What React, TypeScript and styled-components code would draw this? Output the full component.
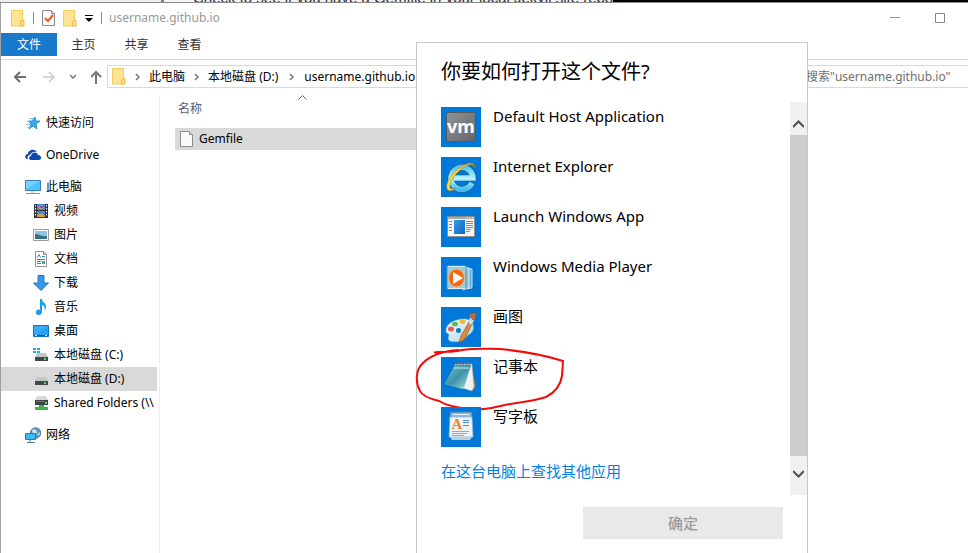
import React from "react";
import styled, { createGlobalStyle } from "styled-components";

const GlobalStyle = createGlobalStyle`
  * { box-sizing: border-box; }
  html, body, #root { height: 100%; }
  body {
    margin: 0;
    overflow: hidden;
    background: #fff;
    color: #000;
    font: 12px/24px "Noto Sans", "Noto Sans CJK SC", sans-serif;
  }
  button, input { font: inherit; color: inherit; }
  button { border: 0; padding: 0; background: none; }
  svg { display: block; flex: none; }
`;

const Desktop = styled.div`
  display: flex;
  flex-direction: column;
  height: 100%;
`;

const PageBehind = styled.div`
  display: flex;
  height: 3px;
  flex: none;
  overflow: hidden;
  background: #000;
  border-bottom: 1px solid #8c8c8c;
`;

const PageText = styled.div`
  display: flex;
  align-items: flex-end;
  height: 2px;
  width: 613px;
  padding-left: 193px;
  background: linear-gradient(90deg, #ededed 161px, #7b7f88 161px, #7b7f88 164px, #f4f4f4 164px);
  color: #333;
  font: 15px/9px "Liberation Sans", sans-serif;
  white-space: nowrap;
`;

const Explorer = styled.main`
  position: relative;
  display: flex;
  flex-direction: column;
  flex: 1;
  min-height: 0;
  border-left: 1px solid #a0a0a0;
`;

const TitleBar = styled.header`
  display: flex;
  align-items: center;
  height: 30px;
  padding: 0 6px 0 10px;
`;

const QuickTools = styled.div`
  display: flex;
  align-items: center;
  gap: 8px;
`;

const Rule = styled.span`
  width: 1px;
  height: 12px;
  background: #8a8a8a;
`;

const WindowTitle = styled.h1`
  flex: 1;
  margin: 0 0 0 7px;
  color: #999;
  font-size: 12px;
  font-weight: 400;
`;

const WindowButton = styled.button`
  display: grid;
  place-items: center;
  width: 45px;
  height: 28px;
`;

const Tabs = styled.nav`
  display: flex;
  height: 27px;
  border-bottom: 1px solid #dadada;
`;

const Tab = styled.button<{ $active?: boolean }>`
  width: ${(p) => (p.$active ? 56 : 53)}px;
  height: 23px;
  line-height: 24px;
  background: ${(p) => (p.$active ? "#1979ca" : "transparent")};
  color: ${(p) => (p.$active ? "#fff" : "#333")};
`;

const AddressRow = styled.div`
  display: flex;
  align-items: center;
  height: 33px;
`;

const NavButtons = styled.div`
  display: flex;
  align-items: center;
  width: 106px;
  padding-left: 13px;
  gap: 15px;
`;

const IconButton = styled.button`
  display: block;
`;

const AddressBar = styled.div`
  display: flex;
  flex: 1;
  align-items: center;
  height: 23px;
  padding-left: 4px;
  border: 1px solid #d9d9d9;
`;

const Crumb = styled.a`
  color: #000;
  text-decoration: none;
  white-space: nowrap;
`;

const CrumbArrow = styled.span<{ $wide?: boolean }>`
  display: grid;
  place-items: center;
  width: ${(p) => (p.$wide ? 26 : 23)}px;
`;

const SearchBox = styled.input`
  width: 188px;
  height: 23px;
  margin-left: 12px;
  padding: 0 0 0 25px;
  border: 1px solid #d9d9d9;
  border-right: 0;
  outline: 0;
  background: #fff;
  &::placeholder { color: #707070; opacity: 1; }
`;

const Body = styled.div`
  display: flex;
  flex: 1;
  min-height: 0;
`;

const Sidebar = styled.ul`
  width: 159px;
  margin: 2px 0 0;
  padding: 16px 2px 0 0;
  border-right: 1px solid #f0f0f0;
  list-style: none;
`;

const SideItem = styled.li<{ $child?: boolean; $selected?: boolean; $gap?: boolean }>`
  margin-top: ${(p) => (p.$gap ? 8 : 0)}px;
  padding-left: ${(p) => (p.$child ? 32 : 24)}px;
  overflow: hidden;
  background: ${(p) => (p.$selected ? "#d9d9d9" : "transparent")};
`;

const SideLink = styled.a`
  display: flex;
  align-items: center;
  gap: 5px;
  height: 24px;
  color: #000;
  text-decoration: none;
  white-space: nowrap;
`;

const Files = styled.section`
  flex: 1;
  padding: 0 200px 0 15px;
`;

const FileTable = styled.table`
  width: 100%;
  border-collapse: collapse;
`;

const NameHeader = styled.th`
  position: relative;
  height: 35px;
  padding: 4px 0 7px 3px;
  color: #4c607a;
  font-weight: 400;
  text-align: left;
`;

const SortMark = styled.svg`
  position: absolute;
  left: 123px;
  top: 2px;
`;

const FileCell = styled.td`
  padding: 0;
`;

const FileRow = styled.div`
  display: flex;
  align-items: center;
  gap: 6px;
  height: 22px;
  padding-left: 5px;
  background: #d9d9d9;
`;

const Dialog = styled.section`
  position: absolute;
  left: 415px;
  top: 39px;
  bottom: 0;
  display: flex;
  flex-direction: column;
  width: 392px;
  border: 1px solid #c8c8c8;
  border-bottom: 0;
  background: #fff;
  font-size: 15px;
`;

const DialogTitle = styled.h2`
  margin: 0;
  padding: 15px 24px 16px;
  font-size: 20px;
  font-weight: 400;
  line-height: 28px;
`;

const DialogBody = styled.div`
  display: flex;
  height: 393px;
`;

const Choices = styled.div`
  flex: 1;
  padding: 5px 0 0 24px;
`;

const AppList = styled.ul`
  display: flex;
  flex-direction: column;
  gap: 10px;
  margin: 0;
  padding: 0;
  list-style: none;
`;

const AppItem = styled.li`
  position: relative;
`;

const AppButton = styled.button`
  display: flex;
  align-items: flex-start;
  gap: 12px;
  width: 100%;
  line-height: 18px;
  text-align: left;
`;

const AppIcon = styled.svg`
  background: #0078d7;
`;

const MoreLink = styled.a`
  display: inline-block;
  margin-top: 12px;
  color: #0080e8;
  text-decoration: none;
`;

const ScrollBar = styled.div`
  display: flex;
  flex-direction: column;
  width: 17px;
  background: #cdcdcd;
`;

const ScrollArrow = styled.button<{ $end?: boolean }>`
  display: grid;
  justify-items: center;
  align-content: ${(p) => (p.$end ? "start" : "end")};
  height: ${(p) => (p.$end ? 39 : 33)}px;
  margin-top: ${(p) => (p.$end ? "auto" : 0)};
  padding: ${(p) => (p.$end ? "14px 0 0" : "0 0 7px")};
  background: #f0f0f0;
`;

const OkButton = styled.button`
  width: 200px;
  height: 32px;
  margin: 12px 24px 0 auto;
  background: #e9e9e9;
  color: #9b9b9b;
  font-weight: 500;
`;

const RedLoop = styled.svg`
  position: absolute;
  left: -26px;
  top: -12px;
  pointer-events: none;
`;

const Folder = () => (
  <svg width="14" height="17" viewBox="0 0 14 17">
    <path d="M.5 .5h11v15.500h-11z" fill="#ffe494" stroke="#f3cd62" />
    <path d="M10.500 10.500h2.500v5.500h-3.500v-3z" fill="#ffe28a" stroke="#e9bb3f" />
  </svg>
);

const Page = ({ tick }: { tick?: boolean }) => (
  <svg width="13" height="16" viewBox="0 0 13 16">
    <path d="M.5.5h9l3 3v12H.5z" fill="#fafafa" stroke="#8c8c8c" />
    <path d="M9.500.5v3h3" fill="#ddd" stroke="#8c8c8c" />
    {tick && <path d="M3 8l3 3 5-6" fill="none" stroke="#e65c22" strokeWidth="2" />}
  </svg>
);

const Chevron = () => (
  <svg width="5" height="8" viewBox="0 0 5 8">
    <path d="M1 1l3 3-3 3" fill="none" stroke="#777" strokeWidth="1.5" />
  </svg>
);

const Arrow = ({ color, d }: { color: string; d: string }) => (
  <svg width="13" height="14" viewBox="0 0 13 14">
    <path d={d} fill="none" stroke={color} strokeWidth="2" />
  </svg>
);

const Drive = ({ kind }: { kind: "c" | "d" | "net" }) => (
  <>
    {kind === "c" && <path d="M0 1h3v2H0zM4 1h3v2H4zM0 4h3v2H0zM4 4h3v2H4z" fill="#12aef0" />}
    {kind === "net" ? (
      <>
        <path d="M4 1h9l2 4H2z" fill="#d8d8d8" />
        <path d="M2 5h13v5H2z" fill="#3d4145" />
        <path d="M3 6h9v1H3z" fill="#777" />
        <path d="M12 7h2v2h-2z" fill="#4fe15b" />
        <path d="M6 10h5v2h4v3H2v-3h4z" fill="#39b54a" />
      </>
    ) : (
      <>
        <path d="M4 6h9l2 4H2z" fill="#c4c6c8" />
        <path d="M2 10h13v4H2z" fill="#44484c" />
        <path d="M11 11h2v2h-2z" fill="#4fe15b" />
      </>
    )}
  </>
);

const sideArt: Record<string, React.ReactNode> = {
  star: (
    <>
      <path d="M10 2l1 4h4l-4 3 1 5-4-3-4 3 2-5-3-3h4z" fill="#39a9e8" stroke="#1479bd" strokeWidth=".7" />
      <path d="M4 3.500h4M2 6.500h3M1 9.500h4M2 12.500h3" stroke="#77c9f2" />
    </>
  ),
  cloud: (
    <>
      <path d="M2 12C-1 11 0 7 3 7 3 3 9 1 12 5 8 4 6 6 5 8 3 8 2 10 3 12z" fill="#1149a5" />
      <path d="M6 13c-3-1-2-4 0-4 0-4 6-5 7-1 4 0 4 5 1 5z" fill="#0b49b0" />
    </>
  ),
  pc: (
    <>
      <path d="M.5 1.5h15v10H.5z" fill="#52c3fa" stroke="#347fb5" />
      <path d="M1 2h13L1 10z" fill="#8cdafe" opacity=".7" />
      <path d="M6 12h4v2H6z" fill="#d5dce2" />
      <path d="M1 14.5h14" stroke="#8092a3" />
    </>
  ),
  film: (
    <>
      <path d="M1 1h14v14H1z" fill="#333" />
      <path d="M4 1h8v6H4zM4 8h8v6H4z" fill="#4e86e8" />
      <path d="M5 5l3-3 3 3-3 1zM4 12l5-2 3 4H4z" fill="#d9a326" />
      <path d="M7 3h3v2H7z" fill="#b5436e" />
      <path d="M2.5 2v12M13.5 2v12" stroke="#fff" strokeDasharray="1.5 1.5" />
    </>
  ),
  image: (
    <>
      <path d="M.5 2.5h15v11H.5z" fill="#fff" stroke="#9c9c9c" />
      <path d="M2 4h12v8H2z" fill="#8ec5ed" />
      <path d="M2 7c4 0 6 3 12 2v3H2z" fill="#3b7063" />
      <path d="M2 11h12v1H2z" fill="#3169a5" />
    </>
  ),
  doc: (
    <>
      <path d="M2.5.5h8l3 3v12h-11z" fill="#fff" stroke="#929292" />
      <path d="M10.5.5v3h3" fill="none" stroke="#929292" />
      <path d="M4 6.500l2-3 1.500 3M9 5.500h3M4 8.5h8M4 10.5h4M4 12.5h4" fill="none" stroke="#2b89c8" />
      <path d="M9 10h3v3H9z" fill="#45a6aa" />
    </>
  ),
  down: <path d="M5 .5h6V8h4.5L8 15.5.5 8H5z" fill="#3a96e8" stroke="#2276bd" />,
  music: (
    <path d="M7 0h2c0 4 5 4 4 9-.5 2-2 3-2 3 2-4 0-5-2-6v7c0 4-7 4-6 0 0-2 2-3 4-2z" fill="#15a0ee" />
  ),
  desktop: (
    <>
      <path d="M.5 2.5h15v11H.5z" fill="#24a1f2" stroke="#1472bd" />
      <path d="M1 3h13L4 11H1z" fill="#4db7f9" opacity=".5" />
      <path d="M1 12.5h14" stroke="#154f86" />
      <path d="M2 12.5h2M12 12.5h2" stroke="#fff" />
    </>
  ),
  c: <Drive kind="c" />,
  d: <Drive kind="d" />,
  net: <Drive kind="net" />,
  network: (
    <>
      <circle cx="10.5" cy="6" r="5.2" fill="#5b98bc" stroke="#487d9f" />
      <path d="M8 2l3 1 1 3-3 1-2-2zM12 7l3-2-1 4z" fill="#cbe5ef" />
      <path d="M.5 6.5h10v6H.5z" fill="#44b8f5" stroke="#277eb7" />
      <path d="M5 13v2M2 15.5h8" stroke="#527a97" />
    </>
  ),
};

const places = [
  { icon: "star", text: "快速访问" },
  { icon: "cloud", text: "OneDrive", gap: true },
  { icon: "pc", text: "此电脑", gap: true },
  { icon: "film", text: "视频", child: true },
  { icon: "image", text: "图片", child: true },
  { icon: "doc", text: "文档", child: true },
  { icon: "down", text: "下载", child: true },
  { icon: "music", text: "音乐", child: true },
  { icon: "desktop", text: "桌面", child: true },
  { icon: "c", text: "本地磁盘 (C:)", child: true },
  { icon: "d", text: "本地磁盘 (D:)", child: true, selected: true },
  { icon: "net", text: "Shared Folders (\\\\", child: true },
  { icon: "network", text: "网络", gap: true },
];

const apps: { text: string; art: React.ReactNode; marked?: boolean }[] = [
  {
    text: "Default Host Application",
    art: (
      <>
        <rect x="5.5" y="5.5" width="29" height="29" rx="2" fill="url(#steel)" stroke="#55585c" />
        <text x="20" y="26" textAnchor="middle" fill="#fff" fontSize="18" fontWeight="700">vm</text>
      </>
    ),
  },
  {
    text: "Internet Explorer",
    art: (
      <>
        <path d="M31 26A11 11 0 1 1 32 21H13" fill="none" stroke="#14609f" strokeWidth="7" />
        <path d="M31 26A11 11 0 1 1 32 21H13" fill="none" stroke="url(#ice)" strokeWidth="5.500" />
        <path
          d="M34 11c0-8-10-5-17 1C9 18 3 29 7 33c2 2 6 0 8-2-4 2-7 1-6-3 1-6 8-14 14-18 5-3 10-4 11 1z"
          fill="url(#gold)"
          stroke="#ad7914"
          strokeWidth=".5"
        />
      </>
    ),
  },
  {
    text: "Launch Windows App",
    art: (
      <>
        <path d="M6.500 9.500h27v20h-27z" fill="#f6f6f6" stroke="#8c8e91" />
        <path d="M7 10h26v2H7z" fill="#aaa" />
        <path d="M26 11h1M29 11h1M31 11h1" stroke="#fff" />
        <path d="M13 13h11v14H13z" fill="url(#blue)" />
        <path d="M8 14.500h3M8 17.500h3M8 20.500h3M8 23.500h3M25 14.500h7M25 16.500h7M25 18.500h7M25 20.500h7M25 22.500h5M25 24.500h4" stroke="#858b90" />
      </>
    ),
  },
  {
    text: "Windows Media Player",
    art: (
      <>
        <path d="M28 29l7 1-6 3H9z" fill="#075a9d" />
        <path d="M25 11l6 1v19l-6 1z" fill="#61afd0" stroke="#c5e7f3" />
        <path d="M22 10l6 1v20l-6 2z" fill="#84c5df" stroke="#d8f2fb" />
        <path d="M6 9h19v23H6z" fill="#9ccbdf" stroke="#4f99bc" />
        <path d="M7 9.500h17M7 31.500h17" stroke="#d7f0fa" />
        <ellipse cx="15.500" cy="21" rx="8" ry="9" fill="#f06a12" stroke="#ffbd76" />
        <path d="M12 15l10 6-10 6z" fill="#fff" />
      </>
    ),
  },
  {
    text: "画图",
    art: (
      <>
        <path
          d="M5 25c-1-8 8-13 19-13 8 1 9 7 8 11-1 3-4 4-6 6-3 5-10 7-17 5-3-2-1-4-1-6 0-2-2-1-3-3z"
          fill="url(#palette)"
          stroke="#8dbdd3"
          strokeWidth=".7"
        />
        <circle cx="17.500" cy="23.500" r="2.500" fill="#1976b9" />
        <ellipse cx="10" cy="22" rx="3" ry="2.500" fill="#e85a4e" />
        <ellipse cx="14" cy="17" rx="3" ry="2.300" fill="#68b852" />
        <ellipse cx="21.500" cy="14.500" rx="3" ry="2.300" fill="#f5b933" />
        <path d="M28 15l3 2-8 16-5 3 2-7z" fill="#db8c3c" stroke="#824617" strokeWidth=".6" />
        <path d="M28 14l1-4 5 2-3 5-2 1z" fill="#d7dce0" />
        <path d="M29 10c-2-1-1-4 2-4h5c-2 3 0 7-4 7z" fill="#a8744b" stroke="#775129" strokeWidth=".6" />
      </>
    ),
  },
  {
    text: "记事本",
    marked: true,
    art: (
      <>
        <path d="M30 8l5 21-4 5z" fill="#a78960" stroke="#735c37" strokeWidth=".6" />
        <path d="M14 7h17l2 23-2 4-11-4z" fill="#f0f3f2" stroke="#9ba5a6" strokeWidth=".6" />
        <path d="M14 8h16l-8 24-18-5z" fill="url(#note)" stroke="#68aab9" strokeWidth=".6" />
        <path d="M13 11h15M20 30l9 3" stroke="#c8edf3" />
        <path d="M16 5v4M19 5v4M22 5v4M25 5v4M28 5v4" stroke="#566a73" />
      </>
    ),
  },
  {
    text: "写字板",
    art: (
      <>
        <path d="M9 5h22v6H9z" fill="#86b9df" stroke="#437eae" />
        <path d="M12 7.500h16" stroke="#e3f4ff" />
        <path d="M9 10h22l1 20H8z" fill="#eef3f8" stroke="#9ab8cc" strokeWidth=".7" />
        <path d="M9 30h22l-2 3H11z" fill="#b9cfde" />
        <text x="16" y="22" textAnchor="middle" fill="#ee851d" fontFamily="Liberation Serif" fontSize="15" fontWeight="700">A</text>
        <path d="M22 13.500h6M22 15.500h6M22 18.500h6" stroke="#4d8ddb" />
        <path d="M11 24.500h17M11 26.500h15M11 28.500h12" stroke="#a1a7ac" />
      </>
    ),
  },
];

const IconPaints = () => (
  <defs>
    <linearGradient id="steel" x2="1" y2="1"><stop stopColor="#929398" /><stop offset="1" stopColor="#646569" /></linearGradient>
    <linearGradient id="ice" x2="0" y2="1"><stop stopColor="#51c8f4" /><stop offset=".5" stopColor="#b6f3ff" /><stop offset="1" stopColor="#45c0ee" /></linearGradient>
    <linearGradient id="gold" x2="1"><stop stopColor="#ffdf3e" /><stop offset="1" stopColor="#f2b51e" /></linearGradient>
    <linearGradient id="blue" x2="1" y2="1"><stop stopColor="#399ce6" /><stop offset="1" stopColor="#0967bd" /></linearGradient>
    <linearGradient id="palette" x2="1" y2="1"><stop stopColor="#f9feff" /><stop offset="1" stopColor="#a8d5e9" /></linearGradient>
    <linearGradient id="note" x2="1" y2="1"><stop stopColor="#7cbccb" /><stop offset=".5" stopColor="#3e93a8" /><stop offset="1" stopColor="#b2e0e6" /></linearGradient>
  </defs>
);

export default function App() {
  return (
    <Desktop>
      <GlobalStyle />
      <PageBehind>
        <PageText>Check to see if you have a Gemfile in your local Jekyll site repo</PageText>
      </PageBehind>
      <Explorer>
        <TitleBar>
          <QuickTools>
            <Folder />
            <Rule />
            <IconButton aria-label="属性"><Page tick /></IconButton>
            <IconButton aria-label="新建文件夹"><Folder /></IconButton>
            <IconButton aria-label="自定义快速访问工具栏">
              <svg width="8" height="8" viewBox="0 0 8 8"><path d="M0 1.500h8" stroke="#000" /><path d="M0 4h8L4 8z" /></svg>
            </IconButton>
            <Rule />
          </QuickTools>
          <WindowTitle>username.github.io</WindowTitle>
          <WindowButton aria-label="最小化">
            <svg width="10" height="10" viewBox="0 0 10 10"><path d="M0 4.500h10" stroke="#999" /></svg>
          </WindowButton>
          <WindowButton aria-label="最大化">
            <svg width="10" height="10" viewBox="0 0 10 10"><path d="M.5.500h9v9h-9z" fill="none" stroke="#888" /></svg>
          </WindowButton>
        </TitleBar>
        <Tabs>
          <Tab $active>文件</Tab>
          <Tab>主页</Tab>
          <Tab>共享</Tab>
          <Tab>查看</Tab>
        </Tabs>
        <AddressRow>
          <NavButtons>
            <IconButton aria-label="后退"><Arrow color="#6e6e6e" d="M6 2L1 7l5 5M1 7h11" /></IconButton>
            <IconButton aria-label="前进"><Arrow color="#d6d6d6" d="M7 2l5 5-5 5M1 7h11" /></IconButton>
            <IconButton aria-label="最近位置">
              <svg width="6" height="5" viewBox="0 0 6 5"><path d="M0 1l3 3 3-3" fill="none" stroke="#777" strokeWidth="1.500" /></svg>
            </IconButton>
            <IconButton aria-label="上移"><Arrow color="#777" d="M0 7l5-5 5 5M5 2v12" /></IconButton>
          </NavButtons>
          <AddressBar>
            <Folder />
            <CrumbArrow><Chevron /></CrumbArrow>
            <Crumb href="#pc">此电脑</Crumb>
            <CrumbArrow><Chevron /></CrumbArrow>
            <Crumb href="#d">本地磁盘 (D:)</Crumb>
            <CrumbArrow $wide><Chevron /></CrumbArrow>
            <Crumb href="#site">username.github.io</Crumb>
          </AddressBar>
          <SearchBox aria-label="搜索" placeholder={'搜索"username.github.io"'} />
        </AddressRow>
        <Body>
          <Sidebar>
            {places.map((p) => (
              <SideItem key={p.text} $child={p.child} $selected={p.selected} $gap={p.gap}>
                <SideLink href={"#" + p.icon}>
                  <svg width="16" height="16" viewBox="0 0 16 16">{sideArt[p.icon]}</svg>
                  {p.text}
                </SideLink>
              </SideItem>
            ))}
          </Sidebar>
          <Files>
            <FileTable>
              <thead>
                <tr>
                  <NameHeader>
                    名称
                    <SortMark width="9" height="5" viewBox="0 0 9 5"><path d="M.5 4.500l4-4 4 4" fill="none" stroke="#666" /></SortMark>
                  </NameHeader>
                </tr>
              </thead>
              <tbody>
                <tr><FileCell><FileRow><Page />Gemfile</FileRow></FileCell></tr>
              </tbody>
            </FileTable>
          </Files>
        </Body>
        <Dialog role="dialog" aria-labelledby="open-with">
          <DialogTitle id="open-with">你要如何打开这个文件?</DialogTitle>
          <DialogBody>
            <Choices>
              <AppList>
                {apps.map((a, i) => (
                  <AppItem key={a.text}>
                    <AppButton>
                      <AppIcon width="40" height="40" viewBox="0 0 40 40">
                        {i === 0 && <IconPaints />}
                        {a.art}
                      </AppIcon>
                      {a.text}
                    </AppButton>
                    {a.marked && (
                      <RedLoop width="152" height="68" viewBox="415 345 152 68">
                        <path
                          d="M434 352.500C444 351 452 353 462 350C476 348 487 349 500 349C520 351 541 354 563 361L562 376C560 388 552 394 546 397C530 402 519 402 505 405C494 407 484 411 470 409C456 407 447 406 439 401C431 399 422 396 420 391C415 382 416 370 422 364C430 355 444 351 459 350"
                          fill="none"
                          stroke="#f00a0a"
                          strokeWidth="2"
                        />
                      </RedLoop>
                    )}
                  </AppItem>
                ))}
              </AppList>
              <MoreLink href="#more">在这台电脑上查找其他应用</MoreLink>
            </Choices>
            <ScrollBar>
              <ScrollArrow aria-label="向上滚动">
                <svg width="11" height="8" viewBox="0 0 11 8"><path d="M0 7l5.500-5.500L11 7" fill="none" stroke="#555" strokeWidth="2.200" /></svg>
              </ScrollArrow>
              <ScrollArrow $end aria-label="向下滚动">
                <svg width="11" height="8" viewBox="0 0 11 8"><path d="M0 1l5.500 5.500L11 1" fill="none" stroke="#555" strokeWidth="2.200" /></svg>
              </ScrollArrow>
            </ScrollBar>
          </DialogBody>
          <OkButton disabled>确定</OkButton>
        </Dialog>
      </Explorer>
    </Desktop>
  );
}
